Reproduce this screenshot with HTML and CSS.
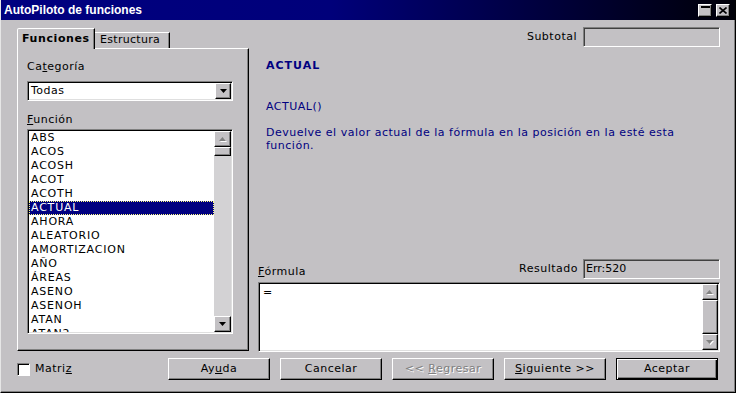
FILE: index.html
```html
<!DOCTYPE html>
<html lang="es">
<head>
    <meta charset="UTF-8">
    <title>AutoPiloto de funciones</title>
    <link rel="stylesheet" href="styles.css">
</head>
<body>
    <div class="dialog">
        <div class="titlebar">
            <span class="title">AutoPiloto de funciones</span>
            <div class="title-buttons">
                <span class="tbtn tbtn-shade">
                    <svg width="9" height="2" viewBox="0 0 9 2"><rect width="9" height="2" fill="#000"/></svg>
                </span>
                <span class="tbtn">
                    <svg width="8" height="7" viewBox="0 0 8 7"><path d="M0.5 0.5 L7.5 6.5 M7.5 0.5 L0.5 6.5" stroke="#000" stroke-width="1.6" fill="none"/></svg>
                </span>
            </div>
        </div>

        <div class="content">
            <div class="left">
                <div class="tabs">
                    <div class="tab tab-active">Funciones</div>
                    <div class="tab tab-second">Estructura</div>
                </div>
                <div class="tab-panel">
                    <div class="field-label">Ca<u>t</u>egoría</div>
                    <div class="combo">
                        <span class="combo-text">Todas</span>
                        <span class="sb-btn combo-btn">
                            <svg width="7" height="4" viewBox="0 0 7 4"><polygon points="0,0 7,0 3.5,4" fill="#000"/></svg>
                        </span>
                    </div>
                    <div class="field-label label-gap"><u>F</u>unción</div>
                    <div class="listbox">
                        <ul class="items">
                            <li>ABS</li>
                            <li>ACOS</li>
                            <li>ACOSH</li>
                            <li>ACOT</li>
                            <li>ACOTH</li>
                            <li class="selected">ACTUAL</li>
                            <li>AHORA</li>
                            <li>ALEATORIO</li>
                            <li>AMORTIZACION</li>
                            <li>AÑO</li>
                            <li>ÁREAS</li>
                            <li>ASENO</li>
                            <li>ASENOH</li>
                            <li>ATAN</li>
                            <li>ATAN2</li>
                        </ul>
                        <div class="scrollbar">
                            <span class="sb-btn">
                                <svg width="8" height="5" viewBox="0 0 8 5"><polygon points="1,5 8,5 4.5,1" fill="#fff"/><polygon points="0,4 7,4 3.5,0" fill="#808080"/></svg>
                            </span>
                            <span class="sb-thumb"></span>
                            <span class="sb-track"></span>
                            <span class="sb-btn">
                                <svg width="7" height="4" viewBox="0 0 7 4"><polygon points="0,0 7,0 3.5,4" fill="#000"/></svg>
                            </span>
                        </div>
                    </div>
                </div>
            </div>

            <div class="right">
                <div class="subtotal-row">
                    <span>Subtotal</span>
                    <div class="field"></div>
                </div>

                <div class="info">
                    <div class="fn-name">ACTUAL</div>
                    <div class="fn-syntax">ACTUAL()</div>
                    <div class="fn-desc">Devuelve el valor actual de la fórmula en la posición en la esté esta función.</div>
                </div>

                <div class="formula-head">
                    <span><u>F</u>órmula</span>
                    <div class="result">
                        <span>Resultado</span>
                        <div class="field">Err:520</div>
                    </div>
                </div>
                <div class="formula-box">
                    <div class="formula-text">=</div>
                    <div class="scrollbar scrollbar-narrow">
                        <span class="sb-btn">
                            <svg width="8" height="5" viewBox="0 0 8 5"><polygon points="1,5 8,5 4.5,1" fill="#fff"/><polygon points="0,4 7,4 3.5,0" fill="#808080"/></svg>
                        </span>
                        <span class="sb-thumb sb-thumb-full"></span>
                        <span class="sb-btn">
                            <svg width="8" height="5" viewBox="0 0 8 5"><polygon points="1,1 8,1 4.5,5" fill="#fff"/><polygon points="0,0 7,0 3.5,4" fill="#808080"/></svg>
                        </span>
                    </div>
                </div>
            </div>
        </div>

        <div class="footer">
            <label class="check">
                <span class="checkbox"></span>
                <span>Matri<u>z</u></span>
            </label>
            <div class="buttons">
                <button class="btn">Ay<u>u</u>da</button>
                <button class="btn">Cancelar</button>
                <button class="btn btn-disabled">&lt;&lt; <u>R</u>egresar</button>
                <button class="btn btn-narrow"><u>S</u>iguiente &gt;&gt;</button>
                <button class="btn btn-default">Aceptar</button>
            </div>
        </div>
    </div>
</body>
</html>
```

FILE: styles.css
```css
* {
    margin: 0;
    padding: 0;
    box-sizing: border-box;
}

body {
    background: #c3c1c4;
    font-family: 'DejaVu Sans', sans-serif;
    font-size: 11px;
    line-height: 14px;
    letter-spacing: 0.5px;
    color: #000;
}

.dialog {
    width: 736px;
    height: 393px;
    background: #c3c1c4;
    border-left: 1px solid #e6e6e6;
    border-right: 1px solid #000;
    border-bottom: 1px solid #000;
    box-shadow: inset -1px -1px #808080;
    display: flex;
    flex-direction: column;
}

/* title bar */
.titlebar {
    height: 20px;
    display: flex;
    align-items: center;
    justify-content: space-between;
    padding: 0 5px 0 3px;
    background: linear-gradient(to right, #000080 0%, #00007a 45%, #000030 80%, #000008 100%);
}

.title {
    color: #fff;
    font-family: 'Liberation Sans', Arial, sans-serif;
    font-weight: bold;
    font-size: 12px;
    letter-spacing: 0;
}

.title-buttons {
    display: flex;
    gap: 4px;
}

.tbtn {
    width: 14px;
    height: 13px;
    background: #c3c1c4;
    border: 1px solid;
    border-color: #fff #000 #000 #fff;
    box-shadow: inset -1px -1px #808080;
    display: flex;
    align-items: center;
    justify-content: center;
}

.tbtn-shade {
    align-items: flex-start;
    padding-top: 1px;
}

.tbtn svg {
    display: block;
}

/* main area */
.content {
    display: flex;
    gap: 9px;
    height: 325px;
    margin-top: 7px;
    padding: 0 15px 0 16px;
}

.left {
    width: 232px;
    padding-top: 1px;
    display: flex;
    flex-direction: column;
}

.tabs {
    display: flex;
    align-items: flex-end;
    height: 20px;
}

.tab {
    height: 16px;
    border: 1px solid;
    border-bottom: none;
    border-color: #fff #000 transparent #fff;
    box-shadow: inset -1px 0 #808080;
    padding-left: 5px;
    white-space: nowrap;
    overflow: hidden;
}

.tab-active {
    position: relative;
    z-index: 1;
    width: 78px;
    height: 21px;
    margin-bottom: -1px;
    background: #c3c1c4;
    padding-top: 3px;
    padding-left: 4px;
    font-weight: bold;
    letter-spacing: 0.6px;
    border-top-left-radius: 2px;
}

.tab-second {
    width: 75px;
    border-left: none;
    letter-spacing: 0.3px;
}

.tab-panel {
    width: 232px;
    height: 303px;
    border: 1px solid;
    border-color: #fff #000 #000 #fff;
    box-shadow: inset -1px -1px #808080;
    padding: 11px 0 0 9px;
}

.field-label {
    height: 14px;
}

.label-gap {
    margin-top: 12px;
}

/* sunken controls */
.combo,
.listbox,
.formula-box {
    border: 1px solid;
    border-color: #808080 #fff #fff #808080;
    box-shadow: inset 1px 1px #000, inset -1px -1px #dfdfdf;
    padding: 1px;
    background: #fff;
    display: flex;
}

.combo {
    width: 206px;
    height: 20px;
    margin-top: 7px;
}

.combo-text {
    flex: 1;
    padding-left: 2px;
    line-height: 16px;
}

.combo-btn {
    width: 16px;
    height: 16px;
}

.listbox {
    width: 206px;
    height: 205px;
    margin-top: 2px;
}

.items {
    list-style: none;
    flex: 1;
    overflow: hidden;
    letter-spacing: 0.8px;
}

.items li {
    height: 14px;
    padding-left: 2px;
    white-space: nowrap;
}

.items li.selected {
    background: #000080;
    color: #fff;
    outline: 1px dotted #ffff80;
    outline-offset: -1px;
}

.scrollbar {
    width: 17px;
    display: flex;
    flex-direction: column;
    background: #d3d2d4;
}

.scrollbar-narrow {
    width: 16px;
}

.sb-btn {
    height: 16px;
    flex-shrink: 0;
    background: #c3c1c4;
    border: 1px solid;
    border-color: #fff #000 #000 #fff;
    box-shadow: inset -1px -1px #808080;
    display: flex;
    align-items: center;
    justify-content: center;
}

.sb-btn svg {
    display: block;
}

.sb-thumb {
    height: 9px;
    background: #c3c1c4;
    border: 1px solid;
    border-color: #fff #000 #000 #fff;
    box-shadow: inset -1px -1px #808080;
}

.sb-thumb-full {
    flex: 1;
}

.sb-track {
    flex: 1;
}

/* right column */
.right {
    flex: 1;
    display: flex;
    flex-direction: column;
}

.subtotal-row {
    height: 20px;
    display: flex;
    justify-content: flex-end;
    align-items: center;
    gap: 6px;
}

.field {
    width: 137px;
    height: 20px;
    border: 1px solid;
    border-color: #808080 #fff #fff #808080;
    box-shadow: inset 1px 1px #404040;
    padding: 1px 0 0 2px;
    line-height: 16px;
    letter-spacing: 0;
}

.info {
    margin-top: 12px;
    padding-left: 8px;
    color: #000080;
}

.fn-name {
    font-weight: bold;
    letter-spacing: 1px;
}

.fn-syntax {
    margin-top: 27px;
}

.fn-desc {
    margin-top: 12px;
    max-width: 440px;
    line-height: 13px;
}

.formula-head {
    margin-top: auto;
    height: 20px;
    display: flex;
    justify-content: space-between;
    align-items: flex-end;
}

.result {
    display: flex;
    align-items: center;
    gap: 5px;
    height: 20px;
}

.formula-box {
    margin-top: 3px;
    height: 70px;
}

.formula-text {
    flex: 1;
    padding: 2px 3px;
}

/* bottom row */
.footer {
    height: 22px;
    margin-top: 6px;
    padding: 0 17px 0 16px;
    display: flex;
    align-items: center;
}

.check {
    display: flex;
    align-items: center;
    gap: 5px;
}

.checkbox {
    width: 13px;
    height: 13px;
    background: #fff;
    border: 1px solid;
    border-color: #808080 #fff #fff #808080;
    box-shadow: inset 1px 1px #000;
}

.buttons {
    margin-left: auto;
    display: flex;
    gap: 10px;
}

.btn {
    width: 102px;
    height: 22px;
    font: inherit;
    letter-spacing: inherit;
    color: #000;
    background: #c3c1c4;
    border: 1px solid;
    border-color: #fff #000 #000 #fff;
    box-shadow: inset -1px -1px #808080;
    text-align: center;
}

.btn-disabled {
    color: #808080;
    text-shadow: 1px 1px #fff;
}

.btn-default {
    border-color: #000;
    box-shadow: inset 1px 1px #fff, inset -1px -1px #000, inset -2px -2px #808080;
}
```
